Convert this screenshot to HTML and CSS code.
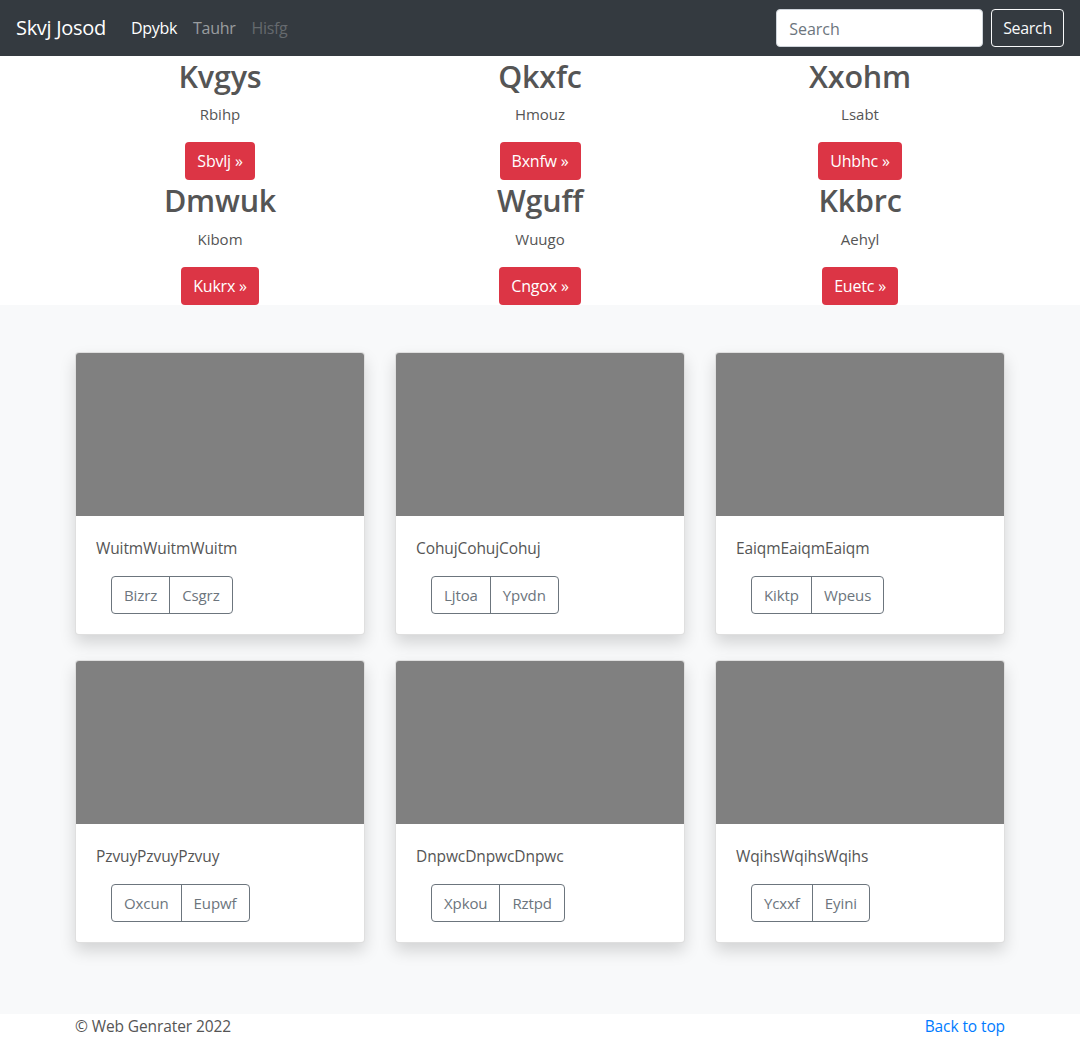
FILE: index.html
```html
<!DOCTYPE html>
<html lang="en">
<head>
<meta charset="utf-8">
<title>Skvj Josod</title>
<link rel="stylesheet" href="styles.css">
</head>
<body>
<header class="navbar">
  <a class="brand" href="#">Skvj Josod</a>
  <nav class="nav">
    <a class="nav-link active" href="#">Dpybk</a>
    <a class="nav-link" href="#">Tauhr</a>
    <a class="nav-link disabled" href="#">Hisfg</a>
  </nav>
  <form class="search">
    <input class="search-input" type="text" placeholder="Search">
    <button class="search-btn" type="button">Search</button>
  </form>
</header>

<section class="features">
  <div class="container feature-grid">
    <div class="feature"><h2>Kvgys</h2><p>Rbihp</p><a class="btn-red" href="#">Sbvlj »</a></div>
    <div class="feature"><h2>Qkxfc</h2><p>Hmouz</p><a class="btn-red" href="#">Bxnfw »</a></div>
    <div class="feature"><h2>Xxohm</h2><p>Lsabt</p><a class="btn-red" href="#">Uhbhc »</a></div>
    <div class="feature"><h2>Dmwuk</h2><p>Kibom</p><a class="btn-red" href="#">Kukrx »</a></div>
    <div class="feature"><h2>Wguff</h2><p>Wuugo</p><a class="btn-red" href="#">Cngox »</a></div>
    <div class="feature"><h2>Kkbrc</h2><p>Aehyl</p><a class="btn-red" href="#">Euetc »</a></div>
  </div>
</section>

<section class="album">
  <div class="container card-grid">
    <div class="card"><div class="card-img"></div><div class="card-body"><p>WuitmWuitmWuitm</p><div class="btn-group"><a href="#">Bizrz</a><a href="#">Csgrz</a></div></div></div>
    <div class="card"><div class="card-img"></div><div class="card-body"><p>CohujCohujCohuj</p><div class="btn-group"><a href="#">Ljtoa</a><a href="#">Ypvdn</a></div></div></div>
    <div class="card"><div class="card-img"></div><div class="card-body"><p>EaiqmEaiqmEaiqm</p><div class="btn-group"><a href="#">Kiktp</a><a href="#">Wpeus</a></div></div></div>
    <div class="card"><div class="card-img"></div><div class="card-body"><p>PzvuyPzvuyPzvuy</p><div class="btn-group"><a href="#">Oxcun</a><a href="#">Eupwf</a></div></div></div>
    <div class="card"><div class="card-img"></div><div class="card-body"><p>DnpwcDnpwcDnpwc</p><div class="btn-group"><a href="#">Xpkou</a><a href="#">Rztpd</a></div></div></div>
    <div class="card"><div class="card-img"></div><div class="card-body"><p>WqihsWqihsWqihs</p><div class="btn-group"><a href="#">Ycxxf</a><a href="#">Eyini</a></div></div></div>
  </div>
</section>

<footer class="footer">
  <div class="container footer-row">
    <span>© Web Genrater 2022</span>
    <a href="#">Back to top</a>
  </div>
</footer>
</body>
</html>
```
FILE: styles.css
```css
* { box-sizing: border-box; }
html, body { margin: 0; }
body {
  font-family: "Open Sans", "Noto Sans", sans-serif;
  font-size: 16px;
  line-height: 1.5;
  color: #555;
  background: #fff;
}
a { text-decoration: none; }

.navbar {
  height: 56px;
  background: #343a40;
  display: flex;
  align-items: center;
  padding: 8px 16px;
}
.brand {
  color: #fff;
  font-size: 20px;
  line-height: 30px;
  margin-right: 17px;
  letter-spacing: -0.3px;
}
.nav { display: flex; }
.nav-link {
  padding: 8px;
  color: rgba(255,255,255,.5);
  font-size: 16px;
  letter-spacing: -0.3px;
}
.nav-link.active { color: #fff; }
.nav-link.disabled { color: rgba(255,255,255,.25); }
.search { margin-left: auto; display: flex; align-items: center; }
.search-input {
  width: 207px;
  height: 38px;
  border: 1px solid #ced4da;
  border-radius: 4px;
  padding: 7px 12px 5px;
  font: inherit;
  color: #495057;
  margin-right: 8px;
}
.search-input::placeholder { color: #6c757d; }
.search-btn {
  height: 38px;
  padding: 6px 11px;
  background: transparent;
  border: 1px solid #f8f9fa;
  border-radius: 4px;
  color: #f8f9fa;
  font: inherit;
  letter-spacing: -0.3px;
}

.container { width: 960px; margin: 0 auto; padding: 0 15px; }

.features { background: #fff; }
.feature-grid {
  display: grid;
  grid-template-columns: repeat(3, 1fr);
  column-gap: 30px;
}
.feature { text-align: center; }
.feature h2 {
  margin: 0 0 8px;
  padding-top: 2px;
  height: 38.4px;
  font-size: 30.5px;
  font-weight: 600;
  line-height: 1.2;
  color: #555;
  letter-spacing: -0.2px;
}
.feature p { margin: 0 0 16px; font-size: 15px; line-height: 24px; }
.btn-red {
  display: inline-block;
  height: 38px;
  line-height: 24px;
  padding: 7px 12px;
  background: #dc3545;
  color: #fff;
  border-radius: 4px;
  font-size: 16px;
  letter-spacing: -0.2px;
}

.album { background: #f8f9fa; padding: 47px 0 71px; }
.card-grid {
  display: grid;
  grid-template-columns: repeat(3, 1fr);
  column-gap: 30px;
  row-gap: 25px;
}
.card {
  background: #fff;
  border: 1px solid rgba(0,0,0,.125);
  border-radius: 4px;
  box-shadow: 0 8px 16px rgba(0,0,0,.15);
  overflow: hidden;
}
.card-img { height: 163px; background: #808080; }
.card-body { padding: 20px; }
.card-body p { margin: 0 0 16px; font-size: 15.5px; line-height: 24px; letter-spacing: -0.1px; height: 24px; }
.btn-group {
  display: inline-flex;
  margin-left: 15px;
  border: 1px solid #6c757d;
  border-radius: 4px;
}
.btn-group a {
  height: 36px;
  line-height: 24px;
  padding: 6px 12px;
  color: #6c757d;
  font-size: 15px;
  letter-spacing: -0.1px;
}
.btn-group a + a { border-left: 1px solid #6c757d; }

.footer { background: #fff; padding: 0; }
.footer-row {
  display: flex;
  justify-content: space-between;
  line-height: 24px;
  font-size: 15.5px;
}
.footer-row span { color: #555; letter-spacing: -0.1px; }
.footer-row a { color: #007bff; letter-spacing: -0.1px; }
```
